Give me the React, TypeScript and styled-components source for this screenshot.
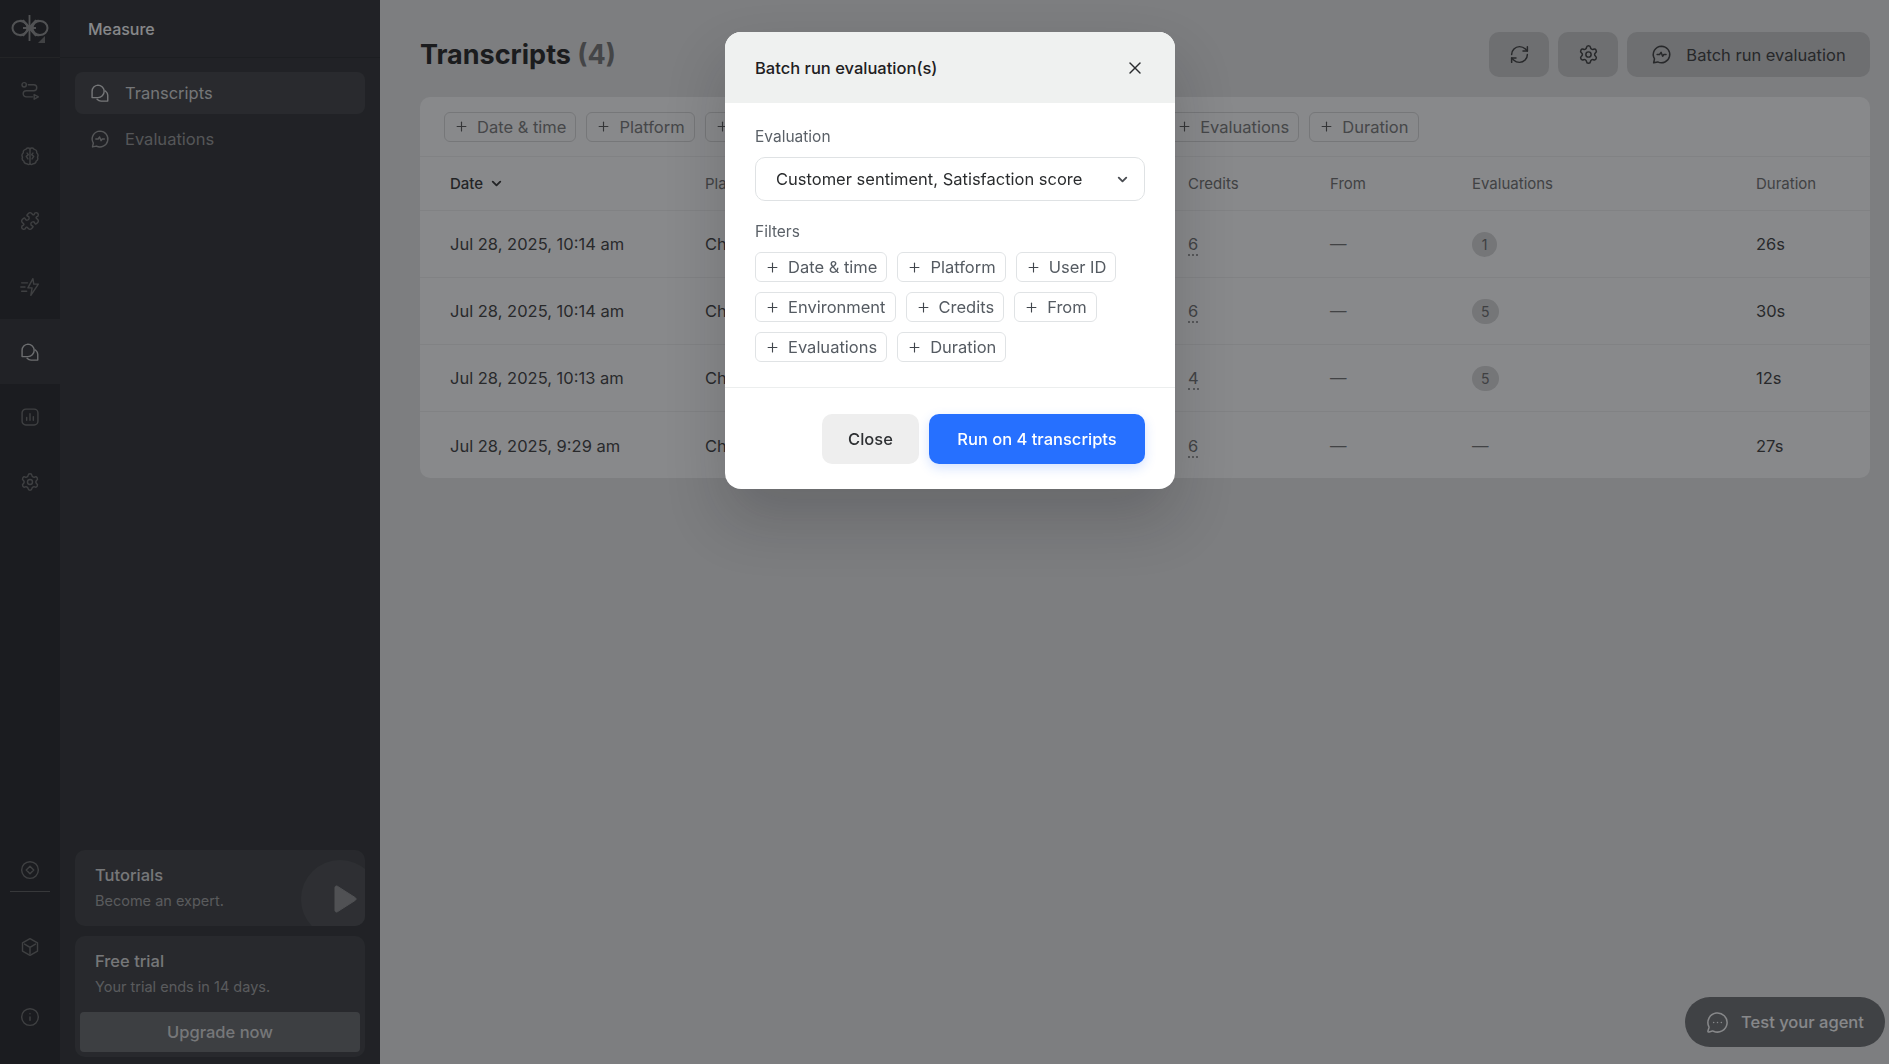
import React from "react";
import styled, { createGlobalStyle } from "styled-components";
import { ChevronDown, Info, MessageCircleMore, Plus, Puzzle, RefreshCw, Settings, X } from "lucide-react";

const FILTERS = ["Date & time", "Platform", "User ID", "Environment", "Credits", "From", "Evaluations", "Duration"];

const ROWS = [
	{ date: "Jul 28, 2025, 10:14 am", credits: "6", evals: "1", duration: "26s" },
	{ date: "Jul 28, 2025, 10:14 am", credits: "6", evals: "5", duration: "30s" },
	{ date: "Jul 28, 2025, 10:13 am", credits: "4", evals: "5", duration: "12s" },
	{ date: "Jul 28, 2025, 9:29 am", credits: "6", evals: "", duration: "27s" },
];

const Svg = ({ size = 20, children }: { size?: number; children: React.ReactNode }) => (
	<svg width={size} height={size} viewBox="0 0 24 24" fill="none" stroke="currentColor" strokeWidth="1.7" strokeLinecap="round" strokeLinejoin="round">
		{children}
	</svg>
);

const RouteIcon = () => (
	<Svg>
		<circle cx="5" cy="4.5" r="2.6" />
		<path d="M10 4.5h6.5a3.6 3.6 0 0 1 0 7.2H7.5a3.6 3.6 0 0 0 0 7.3H15" />
		<path d="M17 16.2v5.6l5-2.8z" />
	</Svg>
);

const BrainHalf = () => (
	<>
		<path d="M12 3.2C10.6 1.8 8 2.2 7 4 5 4.2 3.6 6 4 8 2.4 9.4 2 11.6 3 13.4c-.8 2 0 4 1.6 4.8.2 2 2 3.4 3.8 3 1.100 1 2.600 1.200 3.600.300" />
		<path d="M8.500 8.500 10 10.500 7.500 12.500 9.500 15.500" />
	</>
);

const BrainIcon = () => (
	<Svg>
		<BrainHalf />
		<g transform="matrix(-1 0 0 1 24 0)">
			<BrainHalf />
		</g>
		<path d="M12 3v18.500" />
	</Svg>
);

const ZapLinesIcon = () => (
	<Svg>
		<path d="M15.500 2 9.500 13h5l-1.500 9 9-13.500h-5.500z" />
		<path d="M2 7h7M1 12h5M2 17h6" />
	</Svg>
);

const ChatsIcon = () => (
	<Svg>
		<path d="M9.500 2.500a7.500 7.500 0 0 1 0 15H2.500v-7.500a7.500 7.500 0 0 1 7-7.500z" />
		<path d="M18.500 9.500c1.500 1.300 2.800 3 2.800 5.200v7h-8c-2 0-3.500-.8-4.800-2.200" />
	</Svg>
);

const PulseChatIcon = ({ size = 20 }: { size?: number }) => (
	<Svg size={size}>
		<path d="M12 2.500a9.500 9.500 0 1 1-4.300 18L3 21.500l1-4.600A9.500 9.500 0 0 1 12 2.500z" />
		<path d="M7 12h2.800l1.700-2.500 1.800 4.500 1.400-2h2.500" />
	</Svg>
);

const ChartIcon = () => (
	<Svg>
		<rect x="2.500" y="2.500" width="19" height="19" rx="4.500" />
		<path d="M8 12.500V16M12 8v8M16 11.500V16" />
	</Svg>
);

const DiamondIcon = () => (
	<Svg>
		<circle cx="12" cy="12" r="10" />
		<path d="m12 7.500 4.500 4.500-4.500 4.500L7.500 12z" />
	</Svg>
);

const CubeIcon = () => (
	<Svg>
		<path d="M12 2 21 7v10l-9 5-9-5V7z" />
		<path d="M5.500 8.500 12 12.500l6.500-4M12 12.500V20" />
	</Svg>
);

const Logo = () => (
	<svg width="38" height="28" viewBox="0 0 38 28" fill="none" stroke="#8f8f8f" strokeWidth="2">
		<ellipse cx="9" cy="13" rx="7.500" ry="7" />
		<ellipse cx="29" cy="13" rx="7.500" ry="7" />
		<path d="M18 13C15 7 11 5 8.500 6 M18 13C15 19 11 21 8.500 20 M19 13c3-6 7-8 9.500-7 M19 13c3 6 7 8 9.500 7" />
		<path d="M18.500 0v26M12 5l13 16M25 5 12 21M12 13h13" strokeWidth="1.800" />
	</svg>
);

const App = () => (
	<>
		<GlobalStyle />
		<Shell>
			<Rail>
				<RailLogo>
					<Logo />
					<LogoCorner />
				</RailLogo>
				<RailItem><RouteIcon /></RailItem>
				<RailItem><BrainIcon /></RailItem>
				<RailItem><Puzzle size={20} strokeWidth={1.7} /></RailItem>
				<RailItem><ZapLinesIcon /></RailItem>
				<RailItem $active><ChatsIcon /></RailItem>
				<RailItem><ChartIcon /></RailItem>
				<RailItem><Settings size={20} strokeWidth={1.7} /></RailItem>
				<RailBottom>
					<RailCompact><DiamondIcon /></RailCompact>
					<RailDivider />
					<RailTall><CubeIcon /></RailTall>
					<RailTall><Info size={20} strokeWidth={1.7} /></RailTall>
				</RailBottom>
			</Rail>

			<Sidebar>
				<SidebarHeader>Measure</SidebarHeader>
				<Nav>
					<NavItem $active>
						<ChatsIcon />
						Transcripts
					</NavItem>
					<NavItem>
						<PulseChatIcon />
						Evaluations
					</NavItem>
				</Nav>
				<SidebarCards>
					<TutorialCard>
						<CardTitle>Tutorials</CardTitle>
						<CardText>Become an expert.</CardText>
						<PlayCircle>
							<svg width="26" height="30" viewBox="0 0 26 30">
								<path d="M3 3.500v23c0 1.200 1.300 1.900 2.300 1.300l18-11.500c1-.6 1-2 0-2.600L5.300 2.200C4.300 1.600 3 2.300 3 3.500z" fill="#8c8c8e" stroke="#8c8c8e" />
							</svg>
						</PlayCircle>
					</TutorialCard>
					<TrialCard>
						<CardTitle>Free trial</CardTitle>
						<CardText>Your trial ends in 14 days.</CardText>
						<UpgradeButton>Upgrade now</UpgradeButton>
					</TrialCard>
				</SidebarCards>
			</Sidebar>

			<Main>
				<TopBar>
					<Title>
						Transcripts <Count>(4)</Count>
					</Title>
					<TopActions>
						<TopButton $square><RefreshCw size={21} strokeWidth={1.7} /></TopButton>
						<TopButton $square><Settings size={21} strokeWidth={1.7} /></TopButton>
						<TopButton>
							<PulseChatIcon size={21} />
							Batch run evaluation
						</TopButton>
					</TopActions>
				</TopBar>

				<TableCard>
					<TableFilters>
						{FILTERS.map((name) => (
							<FilterChip key={name}>
								<Plus size={15} strokeWidth={1.8} />
								{name}
							</FilterChip>
						))}
					</TableFilters>
					<HeadRow>
						<DateHead>
							Date
							<ChevronDown size={15} strokeWidth={3} />
						</DateHead>
						<span>Platform</span>
						<span>User ID</span>
						<span>Environment</span>
						<span>Credits</span>
						<span>From</span>
						<span>Evaluations</span>
						<span>Duration</span>
					</HeadRow>
					{ROWS.map((row, i) => (
						<BodyRow key={i}>
							<span>{row.date}</span>
							<span>Chat</span>
							<Muted>—</Muted>
							<span>Production</span>
							<Muted><CreditValue>{row.credits}</CreditValue></Muted>
							<Muted>—</Muted>
							<Muted>{row.evals ? <EvalBadge>{row.evals}</EvalBadge> : "—"}</Muted>
							<span>{row.duration}</span>
						</BodyRow>
					))}
				</TableCard>
			</Main>

			<TestAgent>
				<MessageCircleMore size={23} strokeWidth={1.6} />
				Test your agent
			</TestAgent>
		</Shell>

		<Backdrop>
			<Modal>
				<ModalHeader>
					Batch run evaluation(s)
					<X size={20} strokeWidth={1.7} color="#2a2c2e" />
				</ModalHeader>
				<ModalBody>
					<FieldLabel>Evaluation</FieldLabel>
					<SelectBox>
						Customer sentiment, Satisfaction score
						<ChevronDown size={15} strokeWidth={3} color="#4a4d52" />
					</SelectBox>
					<FiltersLabel>Filters</FiltersLabel>
					<ModalChips>
						{FILTERS.map((name) => (
							<ModalChip key={name}>
								<Plus size={15} strokeWidth={1.8} />
								{name}
							</ModalChip>
						))}
					</ModalChips>
				</ModalBody>
				<ModalFooter>
					<CloseButton>Close</CloseButton>
					<RunButton>Run on 4 transcripts</RunButton>
				</ModalFooter>
			</Modal>
		</Backdrop>
	</>
);

const GlobalStyle = createGlobalStyle`
	* {
		box-sizing: border-box;
	}
	html, body {
		margin: 0;
		height: 100%;
		overflow: hidden;
	}
	body {
		font-family: "Inter", "Liberation Sans", sans-serif;
		font-size: 16px;
		background: #e6e6e6;
	}
	button {
		font: inherit;
		border: 0;
	}
`;

const Shell = styled.div`
	display: flex;
	height: 1064px;
`;

const Rail = styled.nav`
	width: 60px;
	flex: none;
	display: flex;
	flex-direction: column;
	background: #222326;
	color: #7c7c7c;
`;

const RailLogo = styled.div`
	position: relative;
	height: 58px;
	flex: none;
	display: flex;
	align-items: center;
	justify-content: center;
	border-bottom: 1px solid #333;
`;

const LogoCorner = styled.i`
	position: absolute;
	right: 15px;
	bottom: 14px;
	width: 0;
	height: 0;
	border-left: 7px solid transparent;
	border-bottom: 7px solid #6e6e6e;
`;

const RailItem = styled.div<{ $active?: boolean }>`
	height: 65.3px;
	flex: none;
	display: flex;
	align-items: center;
	justify-content: center;
	background: ${({ $active }) => ($active ? "#2e2f32" : "transparent")};
	color: ${({ $active }) => ($active ? "#c4c4c4" : "#6a6a6a")};
`;

const RailBottom = styled.div`
	margin-top: auto;
	padding-bottom: 12px;
	display: flex;
	flex-direction: column;
	align-items: center;
`;

const RailCompact = styled.div`
	height: 42px;
	display: flex;
	align-items: center;
	color: #6a6a6a;
`;

const RailDivider = styled.div`
	width: 40px;
	height: 1px;
	margin-bottom: 20px;
	background: #5a5a5a;
`;

const RailTall = styled(RailCompact)`
	height: 70px;
`;

const Sidebar = styled.aside`
	width: 320px;
	flex: none;
	display: flex;
	flex-direction: column;
	background: #2e2f32;
`;

const SidebarHeader = styled.div`
	height: 58px;
	flex: none;
	display: flex;
	align-items: center;
	padding-left: 28px;
	font-size: 16px;
	font-weight: 500;
	color: #fafafa;
	border-bottom: 1px solid #252628;
`;

const Nav = styled.div`
	display: flex;
	flex-direction: column;
	gap: 1px;
	padding: 14px 15px 0;
`;

const NavItem = styled.div<{ $active?: boolean }>`
	height: 44px;
	display: flex;
	align-items: center;
	gap: 15px;
	padding: 0 15px;
	border-radius: 8px;
	font-size: 16.500px;
	background: ${({ $active }) => ($active ? "#3e3f42" : "transparent")};
	color: ${({ $active }) => ($active ? "#d6d6d6" : "#969696")};
	&:first-child {
		height: 42px;
		margin-bottom: 2px;
	}
`;

const SidebarCards = styled.div`
	margin-top: auto;
	padding: 0 15px 7px;
	display: flex;
	flex-direction: column;
	gap: 10px;
`;

const InfoCard = styled.div`
	position: relative;
	border-radius: 10px;
	background: #3c3d40;
	overflow: hidden;
`;

const TutorialCard = styled(InfoCard)`
	height: 76px;
	padding: 14px 20px;
`;

const TrialCard = styled(InfoCard)`
	height: 121px;
	padding: 14px 5px 5px;
	display: flex;
	flex-direction: column;
	> * {
		margin-left: 15px;
	}
`;

const CardTitle = styled.div`
	font-size: 16.500px;
	font-weight: 500;
	line-height: 22px;
	color: #d8d8d8;
`;

const CardText = styled.div`
	margin-top: 5px;
	font-size: 14.500px;
	line-height: 20px;
	color: #a0a0a0;
`;

const PlayCircle = styled.div`
	position: absolute;
	right: -14px;
	top: 10px;
	width: 78px;
	height: 78px;
	border-radius: 50%;
	background: #48494c;
	display: flex;
	align-items: center;
	justify-content: center;
	padding-left: 10px;
`;

const UpgradeButton = styled.button`
	margin: auto 0 0 !important;
	height: 40px;
	border-radius: 4px;
	background: #66686b;
	color: #d8d8d8;
	font-size: 16.500px;
	font-weight: 500;
`;

const Main = styled.main`
	flex: 1;
	min-width: 0;
	padding: 32px 19px 0 40px;
`;

const TopBar = styled.div`
	height: 45px;
	margin-bottom: 20px;
	display: flex;
	align-items: center;
	justify-content: space-between;
`;

const Title = styled.h1`
	margin: 0;
	font-size: 27px;
	font-weight: 700;
	color: #222;
`;

const Count = styled.span`
	color: #747474;
`;

const TopActions = styled.div`
	display: flex;
	gap: 8px;
`;

const TopButton = styled.button<{ $square?: boolean }>`
	height: 45px;
	width: ${({ $square }) => ($square ? "60px" : "243px")};
	display: flex;
	align-items: center;
	justify-content: center;
	gap: 14px;
	border-radius: 10px;
	background: #c8c8c8;
	color: #3a3a3a;
	font-size: 16.500px;
	& + & {
		margin-left: ${({ $square }) => ($square ? "0" : "1px")};
	}
`;

const TableCard = styled.section`
	height: 381px;
	border-radius: 10px;
	background: #fcfcfc;
	overflow: hidden;
`;

const TableFilters = styled.div`
	height: 60px;
	display: flex;
	align-items: center;
	gap: 10px;
	padding-left: 24px;
	border-bottom: 1px solid #efefef;
`;

const FilterChip = styled.div`
	height: 30px;
	display: flex;
	align-items: center;
	gap: 8px;
	padding: 0 9px;
	border: 1px solid #d8d8d8;
	border-radius: 6px;
	color: #787878;
	font-size: 16.500px;
	white-space: nowrap;
	svg {
		color: #555;
	}
`;

const TableRow = styled.div`
	display: grid;
	grid-template-columns: 255px 145px 170px 168px 142px 142px 284px 1fr;
	align-items: center;
	padding-left: 30px;
	border-bottom: 1px solid #efefef;
	&:last-child {
		border-bottom: 0;
	}
`;

const HeadRow = styled(TableRow)`
	height: 54px;
	font-size: 15px;
	color: #6e6e6e;
`;

const DateHead = styled.span`
	display: flex;
	align-items: center;
	gap: 6px;
	font-weight: 500;
	color: #333;
`;

const BodyRow = styled(TableRow)`
	height: 67px;
	font-size: 16.500px;
	color: #3c3c3c;
`;

const Muted = styled.span`
	color: #707070;
`;

const CreditValue = styled.span`
	border-bottom: 2px dotted #9a9a9a;
`;

const EvalBadge = styled.span`
	display: inline-flex;
	align-items: center;
	justify-content: center;
	height: 25px;
	min-width: 25px;
	padding: 0 9px;
	border-radius: 13px;
	background: #d6d6d6;
	color: #6a6a6a;
	font-size: 14px;
`;

const TestAgent = styled.div`
	position: absolute;
	right: 4px;
	bottom: 17px;
	width: 200px;
	height: 50px;
	display: flex;
	align-items: center;
	justify-content: center;
	gap: 12px;
	border-radius: 25px;
	background: #6c6e70;
	color: #fafafa;
	font-size: 16.500px;
	font-weight: 500;
`;

const Backdrop = styled.div`
	position: fixed;
	inset: 0;
	z-index: 10;
	background: rgba(20, 22, 26, 0.5);
`;

const Modal = styled.div`
	position: absolute;
	left: 725px;
	top: 32px;
	width: 450px;
	height: 457px;
	border-radius: 16px;
	background: #fff;
	overflow: hidden;
	box-shadow: 0 30px 60px rgba(20, 22, 26, 0.2);
`;

const ModalHeader = styled.div`
	height: 71px;
	display: flex;
	align-items: center;
	justify-content: space-between;
	padding: 0 30px;
	background: #eff1f0;
	font-size: 16.500px;
	font-weight: 500;
	color: #1e2022;
`;

const ModalBody = styled.div`
	height: 285px;
	padding: 24px 30px 0;
	border-bottom: 1px solid #eceeee;
`;

const FieldLabel = styled.div`
	font-size: 15.500px;
	line-height: 20px;
	color: #5b6168;
`;

const FiltersLabel = styled(FieldLabel)`
	margin-top: 21px;
`;

const SelectBox = styled.div`
	margin-top: 10px;
	height: 44px;
	display: flex;
	align-items: center;
	justify-content: space-between;
	padding: 0 14px 0 20px;
	border: 1px solid #dfe2e4;
	border-radius: 10px;
	font-size: 16.500px;
	color: #2a2c2e;
`;

const ModalChips = styled.div`
	margin-top: 10px;
	display: flex;
	flex-wrap: wrap;
	gap: 10px;
`;

const ModalChip = styled(FilterChip)`
	border-color: #e0e3e5;
	color: #555b62;
	svg {
		color: #41464c;
	}
`;

const ModalFooter = styled.div`
	display: flex;
	justify-content: flex-end;
	gap: 10px;
	padding: 26px 30px 0;
`;

const CloseButton = styled.button`
	width: 97px;
	height: 50px;
	border-radius: 10px;
	background: #eeeeee;
	color: #2e3033;
	font-size: 16.500px;
	font-weight: 500;
`;

const RunButton = styled.button`
	width: 216px;
	height: 50px;
	border-radius: 10px;
	background: #2670ff;
	color: #fff;
	font-size: 16.500px;
	font-weight: 500;
	box-shadow: 0 4px 12px rgba(38, 112, 255, 0.2);
`;

export default App;
